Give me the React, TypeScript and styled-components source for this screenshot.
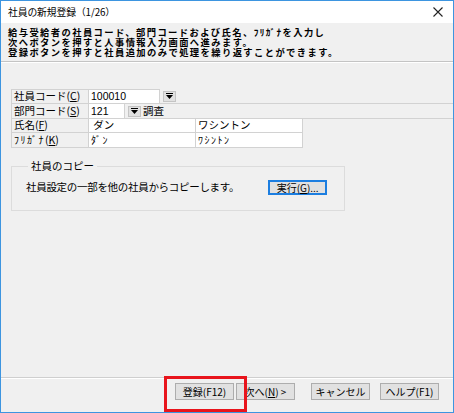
import React from "react";
import styled, { createGlobalStyle } from "styled-components";

const GlobalStyle = createGlobalStyle`
  html, body {
    margin: 0;
    padding: 0;
    background: #f0f0f0;
  }
  body {
    font-family: "Noto Sans CJK JP", "Liberation Sans", sans-serif;
    color: #000;
  }
`;

const Window = styled.div`
  position: relative;
  box-sizing: border-box;
  width: 454px;
  height: 413px;
  border: 1px solid #3d95e0;
  background: #f0f0f0;
  display: flex;
  flex-direction: column;
  overflow: hidden;
`;

const TitleBar = styled.div`
  height: 22px;
  background: #fff;
  display: flex;
  align-items: center;
  justify-content: space-between;
  padding: 0 10px 0 7px;
  font-size: 9.8px;
  letter-spacing: -0.1px;
`;

const Header = styled.div`
  box-sizing: border-box;
  height: 39px;
  padding: 4px 7px 0;
  font-size: 9.3px;
  line-height: 10px;
  font-weight: bold;
  letter-spacing: 1.4px;
  border-bottom: 1px solid #c4c4c4;
  box-shadow: 0 1px 0 #fff;
`;

const Main = styled.div`
  flex: 1;
  padding: 27px 0 0 10px;
  display: flex;
  flex-direction: column;
`;

const Table = styled.div`
  display: flex;
  flex-direction: column;
  font-size: 10.5px;
`;

const Row = styled.div<{ $h: number }>`
  display: flex;
  height: ${(p) => p.$h}px;
`;

const Cell = styled.div<{ $w?: number; $white?: boolean; $grow?: boolean }>`
  box-sizing: border-box;
  height: calc(100% + 1px);
  ${(p) => (p.$w ? `width: ${p.$w}px;` : "")}
  ${(p) => (p.$grow ? "flex: 1;" : "")}
  margin-right: -1px;
  border: 1px solid #d2d2d2;
  background: ${(p) => (p.$white ? "#fff" : "#f0f0f0")};
  display: flex;
  align-items: center;
  padding-left: 2px;
  white-space: nowrap;
  overflow: hidden;
  line-height: 1;
`;

const Value = styled.span`
  font-family: "Liberation Sans", "Noto Sans CJK JP", sans-serif;
  font-size: 10.5px;
`;

const Kana = styled.span`
  font-size: 10px;
  letter-spacing: 1.5px;
`;

const Free = styled.div`
  display: flex;
  align-items: center;
  gap: 2px;
  padding-left: 4px;
  font-size: 10.5px;
`;

const Drop = styled.div<{ $ml?: number }>`
  box-sizing: border-box;
  width: 13px;
  height: 11px;
  margin-left: ${(p) => p.$ml ?? 0}px;
  margin-right: 2px;
  background: #e1e1e1;
  border: 1px solid #c4c4c4;
  display: flex;
  align-items: center;
  justify-content: center;
`;

const GroupBox = styled.fieldset`
  box-sizing: border-box;
  width: 334px;
  height: 50px;
  margin: 14px 0 0;
  padding: 9px 0 0 14px;
  border: 1px solid #dcdcdc;
  display: flex;
  align-items: flex-start;
  gap: 29px;
  font-size: 10.5px;
`;

const Legend = styled.legend`
  padding: 0 3px;
  margin-left: 2px;
  font-size: 10.5px;
  line-height: 10px;
`;

const GroupText = styled.span`
  line-height: 14px;
  letter-spacing: -0.3px;
  padding-top: 0;
`;

const Button = styled.button<{ $focus?: boolean; $ml?: number }>`
  box-sizing: border-box;
  width: 59px;
  height: 17px;
  margin: 0 0 0 ${(p) => p.$ml ?? 0}px;
  padding: 0;
  background: #e1e1e1;
  border: ${(p) => (p.$focus ? "2px solid #1c7ee0" : "1px solid #adadad")};
  font-family: "Noto Sans CJK JP", "Liberation Sans", sans-serif;
  font-size: 10px;
  line-height: 1;
  color: #000;
  white-space: nowrap;
  display: flex;
  align-items: center;
  justify-content: center;
`;

const SmallButton = styled(Button)`
  height: 15px;
`;

const Footer = styled.div`
  box-sizing: border-box;
  height: 35px;
  border-top: 1px solid #cfcfcf;
  box-shadow: inset 0 1px 0 #fff;
  display: flex;
  justify-content: flex-end;
  align-items: flex-start;
  padding: 5px 14px 0 0;
`;

const Highlight = styled.div`
  position: absolute;
  left: 163px;
  top: 375px;
  width: 83px;
  height: 36px;
  box-sizing: border-box;
  border: 3px solid #e8141c;
  pointer-events: none;
`;

const DropIcon = () => (
  <svg width="7" height="6" viewBox="0 0 7 6">
    <rect x="0" y="0" width="7" height="1" fill="#000" />
    <path d="M0 2 L7 2 L3.5 6 Z" fill="#000" />
  </svg>
);

const CloseIcon = () => (
  <svg width="10" height="10" viewBox="0 0 10 10">
    <path d="M0.5 0.5 L9.5 9.5 M9.5 0.5 L0.5 9.5" stroke="#222" strokeWidth="1.1" />
  </svg>
);

export default function App() {
  return (
    <>
      <GlobalStyle />
      <Window>
        <TitleBar>
          <span>社員の新規登録（1/26）</span>
          <CloseIcon />
        </TitleBar>
        <Header>
          給与受給者の社員コード、部門コードおよび氏名、ﾌﾘｶﾞﾅを入力し
          <br />
          次へボタンを押すと人事情報入力画面へ進みます。
          <br />
          登録ボタンを押すと社員追加のみで処理を繰り返すことができます。
        </Header>
        <Main>
          <Table>
            <Row $h={14}>
              <Cell $w={78}>社員コード(<u>C</u>)</Cell>
              <Cell $w={72} $white>
                <Value>100010</Value>
              </Cell>
              <Free>
                <Drop>
                  <DropIcon />
                </Drop>
              </Free>
            </Row>
            <Row $h={15}>
              <Cell $w={78}>部門コード(<u>S</u>)</Cell>
              <Cell $w={37} $white>
                <Value>121</Value>
              </Cell>
              <Cell $grow>
                <Drop $ml={1}>
                  <DropIcon />
                </Drop>
                <span>調査</span>
              </Cell>
            </Row>
            <Row $h={14}>
              <Cell $w={78}>氏名(<u>F</u>)</Cell>
              <Cell $w={108} $white>
                <span>&nbsp;ダン</span>
              </Cell>
              <Cell $w={108} $white>
                <span>ワシントン</span>
              </Cell>
            </Row>
            <Row $h={15}>
              <Cell $w={78}>
                <Kana>ﾌﾘｶﾞﾅ</Kana>(<u>K</u>)
              </Cell>
              <Cell $w={108} $white>
                <Kana>ﾀﾞﾝ</Kana>
              </Cell>
              <Cell $w={108} $white>
                <Kana>ﾜｼﾝﾄﾝ</Kana>
              </Cell>
            </Row>
          </Table>
          <GroupBox>
            <Legend>社員のコピー</Legend>
            <GroupText>社員設定の一部を他の社員からコピーします。</GroupText>
            <SmallButton $focus>
              実行(<u>G</u>)...
            </SmallButton>
          </GroupBox>
        </Main>
        <Footer>
          <Button>登録(F12)</Button>
          <Button $ml={2}>
            次へ(<u>N</u>) &gt;
          </Button>
          <Button $ml={16}>キャンセル</Button>
          <Button $ml={10}>ヘルプ(F1)</Button>
        </Footer>
        <Highlight />
      </Window>
    </>
  );
}
